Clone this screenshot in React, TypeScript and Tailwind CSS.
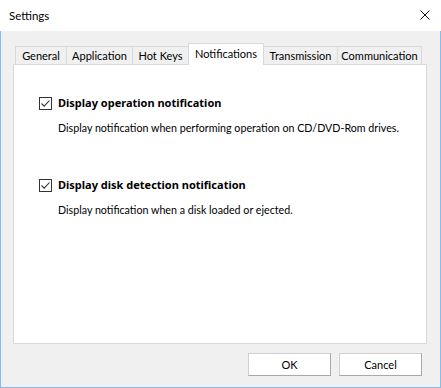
import React from 'react';

const tabs = [
  { label: 'General', w: 'w-[52px]' },
  { label: 'Application', w: 'w-[67px]' },
  { label: 'Hot Keys', w: 'w-[57px]' },
  { label: 'Notifications', w: 'w-[76px]', active: true },
  { label: 'Transmission', w: 'w-[75px]' },
  { label: 'Communication', w: 'w-[85px]' },
];

const CheckBox: React.FC = () => (
  <span className="w-[13px] h-[13px] border border-[#333333] bg-white flex items-center justify-center shrink-0">
    <svg width="11" height="11" viewBox="0 0 11 11">
      <path d="M1.5 5.5 L4.2 8.2 L9.5 2.5" fill="none" stroke="#333333" strokeWidth="1.1" />
    </svg>
  </span>
);

const Option: React.FC<{ title: string; desc: string; className?: string }> = ({ title, desc, className }) => (
  <div className={className}>
    <div className="flex items-center gap-[6px] h-[16px]">
      <CheckBox />
      <span className="font-bold text-black leading-[16px] font-['Noto_Sans',sans-serif]">{title}</span>
    </div>
    <div className="mt-[9px] pl-[19px] leading-[16px] text-black text-[10.7px]">{desc}</div>
  </div>
);

const App: React.FC = () => {
  return (
    <div className="w-[441px] h-[388px] flex flex-col text-[11px] font-['Lato',sans-serif] text-black bg-white">
      <div className="h-[31px] shrink-0 flex items-center justify-between pl-[9px] pr-[11px] bg-white">
        <span className="leading-none text-[11.5px]">Settings</span>
        <svg width="10" height="10" viewBox="0 0 10 10" className="mt-[-1px]">
          <path d="M0.5 0.5 L9.5 9.5 M9.5 0.5 L0.5 9.5" stroke="#111111" strokeWidth="1" />
        </svg>
      </div>
      <div className="flex-1 flex flex-col bg-[#f0f0f0] border-x border-b border-[#86bdf0] pl-[12px] pr-[13px] pt-[12px]">
        <div className="h-[21px] flex items-end pl-[2px] relative z-10">
          {tabs.map((t, i) =>
            t.active ? (
              <div
                key={t.label}
                className={`${t.w} h-[22px] -mb-px relative z-10 ${i > 0 ? '-ml-px' : ''} bg-white border-x border-t border-[#d9d9d9] flex items-start justify-center pt-[2px] leading-[16px]`}
              >
                {t.label}
              </div>
            ) : (
              <div
                key={t.label}
                className={`${t.w} h-[18px] ${i > 0 ? '-ml-px' : ''} bg-[#f0f0f0] border-x border-t border-[#d9d9d9] flex items-center justify-center leading-[16px]`}
              >
                {t.label}
              </div>
            )
          )}
        </div>
        <div className="h-[280px] bg-white border border-[#d9d9d9] pl-[25px] pt-[30px]">
          <Option title="Display operation notification" desc="Display notification when performing operation on CD/DVD-Rom drives." />
          <Option className="mt-[41px]" title="Display disk detection notification" desc="Display notification when a disk loaded or ejected." />
        </div>
        <div className="mt-[9px] flex justify-end gap-[8px] pr-[5px]">
          <button className="w-[83px] h-[23px] bg-white border border-[#d0d0d0] border-r-[#a8a8a8] border-b-[#a8a8a8] leading-none">OK</button>
          <button className="w-[83px] h-[23px] bg-white border border-[#d0d0d0] border-r-[#a8a8a8] border-b-[#a8a8a8] leading-none">Cancel</button>
        </div>
      </div>
    </div>
  );
};

export default App;
